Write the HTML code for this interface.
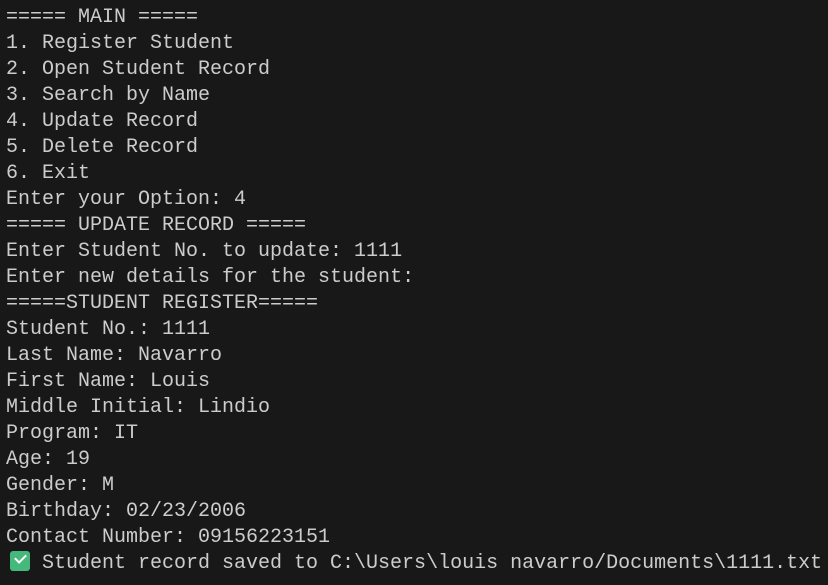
<!DOCTYPE html>
<html><head><style>
html,body{margin:0;padding:0;background:#181818;width:828px;height:585px;overflow:hidden}
pre{margin:0;position:absolute;left:6px;top:5px;font-family:"Liberation Mono","DejaVu Sans Mono",monospace;font-size:20px;line-height:26px;color:#cccccc}
.ck{display:inline-block;width:20px;height:20px;background:#45b97c;border-radius:3px;vertical-align:-3px;position:relative;margin-left:4px;margin-right:12px}
.ck:after{content:"";position:absolute;left:5px;top:3px;width:9px;height:5px;border-left:2.5px solid #fff;border-bottom:2.5px solid #fff;transform:rotate(-45deg)}
</style></head><body><pre>===== MAIN =====
1. Register Student
2. Open Student Record
3. Search by Name
4. Update Record
5. Delete Record
6. Exit
Enter your Option: 4
===== UPDATE RECORD =====
Enter Student No. to update: 1111
Enter new details for the student:
=====STUDENT REGISTER=====
Student No.: 1111
Last Name: Navarro
First Name: Louis
Middle Initial: Lindio
Program: IT
Age: 19
Gender: M
Birthday: 02/23/2006
Contact Number: 09156223151
<span class="ck"></span>Student record saved to C:\Users\louis navarro/Documents\1111.txt</pre></body></html>
